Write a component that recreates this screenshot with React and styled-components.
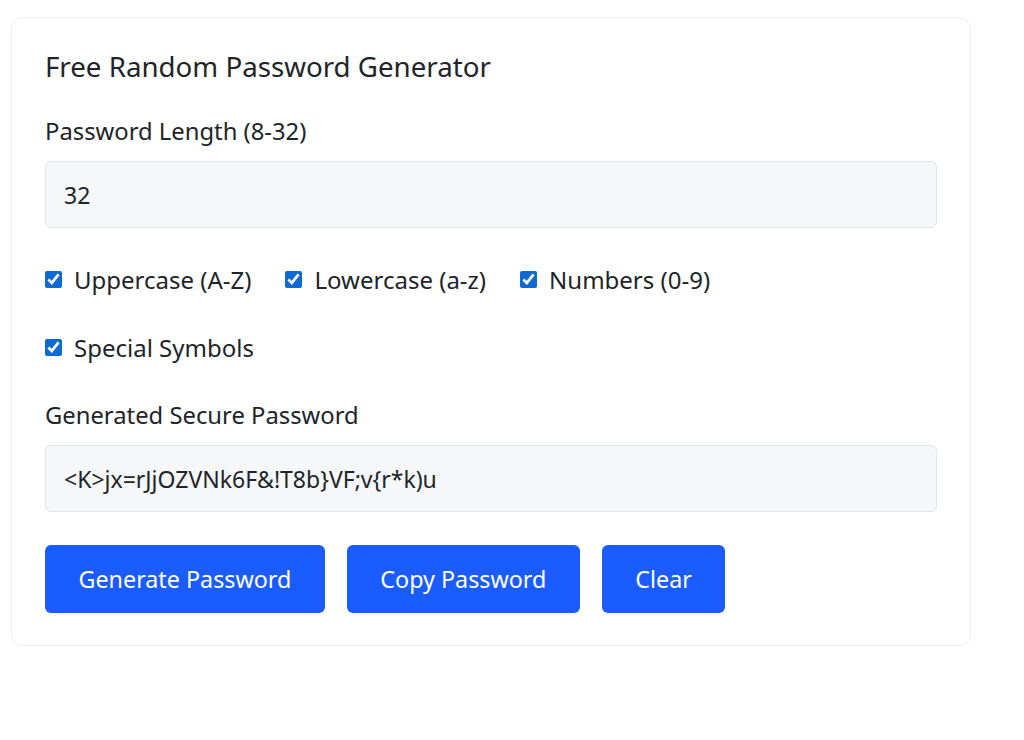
import React from 'react';
import styled, { createGlobalStyle } from 'styled-components';

const GlobalStyle = createGlobalStyle`
    body {
        margin: 0;
        background: #ffffff;
        font-family: 'Noto Sans', 'Open Sans', sans-serif;
        color: #212529;
    }
`;

const options = [
    { id: 'upper', label: 'Uppercase (A-Z)' },
    { id: 'lower', label: 'Lowercase (a-z)' },
    { id: 'numbers', label: 'Numbers (0-9)' },
    { id: 'symbols', label: 'Special Symbols' },
];

const App = () => {
    return (
        <Page>
            <GlobalStyle />
            <Card>
                <Title>Free Random Password Generator</Title>
                <Label htmlFor="length">Password Length (8-32)</Label>
                <Field id="length" type="text" defaultValue="32" />
                <Options>
                    {options.map(option => (
                        <Option key={option.id}>
                            <Check type="checkbox" defaultChecked />
                            <span>{option.label}</span>
                        </Option>
                    ))}
                </Options>
                <Label htmlFor="result">Generated Secure Password</Label>
                <Field id="result" type="text" readOnly value="<K>jx=rJjOZVNk6F&!T8b}VF;v{r*k)u" />
                <Buttons>
                    <Button>Generate Password</Button>
                    <Button>Copy Password</Button>
                    <Button>Clear</Button>
                </Buttons>
            </Card>
        </Page>
    )
}

export default App;

const Page = styled.div`
    padding: 17px 0 0 11px;
`;

const Card = styled.div`
    width: 960px;
    box-sizing: border-box;
    border: 1px solid #eceef1;
    border-radius: 12px;
    padding: 32px 33px 32px 33px;
    display: flex;
    flex-direction: column;
`;

const Title = styled.h1`
    margin: 0 0 32px 0;
    font-size: 27.7px;
    font-weight: 400;
    line-height: 33px;
    color: #212529;
`;

const Label = styled.label`
    font-size: 23.8px;
    line-height: 33px;
    margin-bottom: 13px;
`;

const Field = styled.input`
    height: 67px;
    box-sizing: border-box;
    width: 100%;
    background: #f6f7f9;
    border: 1px solid #e1e4e8;
    border-radius: 6px;
    padding: 0 18px;
    font-family: 'Noto Sans', 'Open Sans', sans-serif;
    font-size: 23px;
    color: #212529;
    outline: none;
`;

const Options = styled.div`
    display: flex;
    flex-wrap: wrap;
    column-gap: 34px;
    row-gap: 35px;
    margin: 35px 0 35px 0;
`;

const Option = styled.label`
    display: flex;
    align-items: center;
    gap: 12px;
    font-size: 24px;
    line-height: 33px;
`;

const Check = styled.input`
    width: 17px;
    height: 17px;
    margin: 0;
    accent-color: #0b6bd3;
`;

const Buttons = styled.div`
    display: flex;
    gap: 22px;
    margin-top: 33px;
`;

const Button = styled.button`
    height: 68px;
    padding: 0 33.5px;
    border: none;
    border-radius: 6px;
    background: #1a5cff;
    color: #ffffff;
    font-family: 'Noto Sans', 'Open Sans', sans-serif;
    font-size: 23.3px;
    cursor: pointer;
`;
